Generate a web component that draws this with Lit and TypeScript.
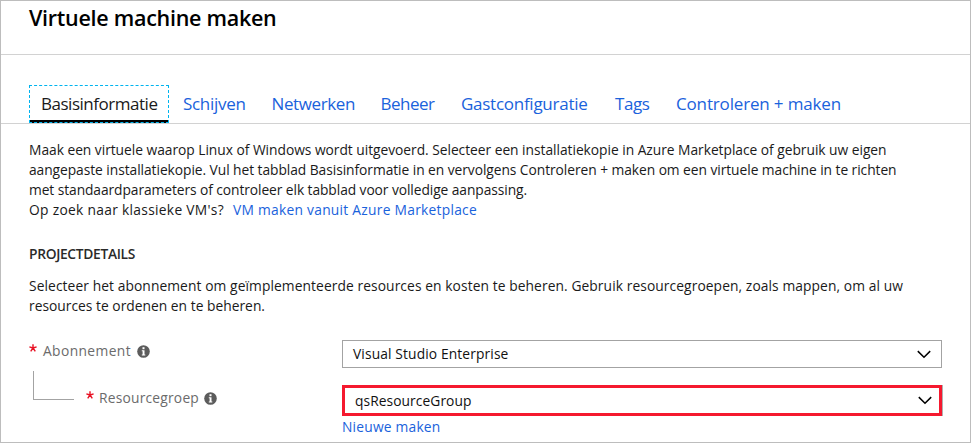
import { LitElement, html, css, svg } from "lit";
import { customElement, property, state } from "lit/decorators.js";
import { styleMap } from "lit/directives/style-map.js";

/** A single line of text whose tracking is adjusted to fill a given width. */
@customElement("fit-text")
class FitText extends LitElement {
  @property() text = "";
  @property({ type: Number }) width = 0;
  @state() private tracking = 0;

  static styles = css`
    :host { display: block; flex: none; white-space: pre; }
    .run { display: inline-block; }
  `;

  firstUpdated() {
    const run = this.renderRoot.querySelector(".run") as HTMLElement;
    const natural = run.getBoundingClientRect().width;
    this.tracking = (this.width - natural) / this.text.length;
  }

  render() {
    return html`<span class="run" style=${styleMap({ letterSpacing: `${this.tracking}px` })}>${this.text}</span>`;
  }
}

@customElement("info-icon")
class InfoIcon extends LitElement {
  static styles = css`
    :host { display: block; flex: none; width: 13px; height: 13px; }
    .icon { display: block; width: 100%; height: 100%; }
  `;
  render() {
    return html`<svg class="icon" viewBox="0 0 13 13">
      <circle cx="6.5" cy="6.5" r="6.3" fill="#5c5c5c" />
      <rect x="5.5" y="2.2" width="2" height="2" fill="#fff" />
      <path d="M4.8 5.2H7.5V9.5H8.3V10.5H4.8V9.5H5.6V6.2H4.8Z" fill="#fff" />
    </svg>`;
  }
}

@customElement("required-mark")
class RequiredMark extends LitElement {
  static styles = css`
    :host { display: block; flex: none; width: 8px; height: 8px; }
    .mark { display: block; }
  `;
  render() {
    return html`<svg class="mark" width="8" height="8" viewBox="0 0 8 8">
      ${svg`<path d="M4 4V0.2M4 4L0.4 2.9M4 4L7.6 2.9M4 4L1.7 7.3M4 4L6.3 7.3" stroke="#e81123" stroke-width="1.4" fill="none" />`}
    </svg>`;
  }
}

@customElement("select-box")
class SelectBox extends LitElement {
  @property() value = "";
  @property({ type: Number }) textWidth = 0;
  static styles = css`
    :host { display: flex; align-items: center; justify-content: space-between; box-sizing: border-box;
      background: #fff; color: #111; line-height: 20px; }
    .chevron { display: block; flex: none; }
  `;
  render() {
    return html`<fit-text .text=${this.value} .width=${this.textWidth}></fit-text>
      <svg class="chevron" width="14" height="9" viewBox="0 0 14 9">
        <path d="M0.8 1.1L7 7.3L13.2 1.1" fill="none" stroke="#000" stroke-width="1.5" />
      </svg>`;
  }
}

const TABS = [
  { label: "Schijven", width: 62.5 },
  { label: "Netwerken", width: 83.5 },
  { label: "Beheer", width: 54 },
  { label: "Gastconfiguratie", width: 126.5 },
  { label: "Tags", width: 34.5 },
  { label: "Controleren + maken", width: 165 },
];

const INTRO = [
  { text: "Maak een virtuele waarop Linux of Windows wordt uitgevoerd. Selecteer een installatiekopie in Azure Marketplace of gebruik uw eigen", width: 857.5 },
  { text: "aangepaste installatiekopie. Vul het tabblad Basisinformatie in en vervolgens Controleren + maken om een virtuele machine in te richten", width: 867.5 },
  { text: "met standaardparameters of controleer elk tabblad voor volledige aanpassing.", width: 498 },
];

@customElement("app-root")
class AppRoot extends LitElement {
  static styles = css`
    :host { display: block; box-sizing: border-box; width: 971px; height: 443px; overflow: hidden;
      background: #fff; border: 1px solid #bdbdbd; color: #1a1a1a;
      font-family: "Open Sans", "Noto Sans", sans-serif; font-size: 13.8px; font-weight: 400; line-height: 20px; }
    .title { box-sizing: border-box; height: 54px; margin: 0; padding: 2px 0 0 28px;
      border-bottom: 1px solid #d2d2d2; font-size: 21.5px; line-height: 30px; font-weight: 600; color: #000; }
    .tabs { display: flex; box-sizing: border-box; height: 69px; padding: 30px 0 0 28px;
      border-bottom: 1px solid #d2d2d2; font-size: 17px; color: #1a62dc; }
    .active { box-sizing: border-box; width: 140px; height: 38px; padding: 8px 0 0 11px; flex: none;
      color: #1a1a1a; border: 1px dashed #00b4ef;
      background: linear-gradient(#000, #000) bottom / 100% 3px no-repeat border-box; }
    .tab { padding-top: 9px; flex: none; }
    .list { display: grid; grid-template-columns: 88.5px 109px 80.5px 154px 61px auto; padding-left: 14px; }
    .intro { padding: 16px 0 0 28px; }
    .row { display: flex; }
    .link { color: #1a62dc; }
    .more { gap: 9px; }
    .heading { margin: 0; padding: 24px 0 0 28px; font-size: 13.8px; font-weight: 600; color: #2a2a2a; }
    .details { padding: 12px 0 0 28px; }
    .form { display: grid; grid-template-columns: 313px 601px; padding: 24px 0 0 28px; }
    .labels { color: #6b6b6b; }
    .field { display: flex; }
    .first { padding-top: 1px; }
    .first required-mark { margin: 3px 6px 0 0; }
    .first info-icon { margin: 4px 0 0 6px; }
    .child { display: flex; height: 47px; }
    .branch { box-sizing: border-box; width: 41px; height: 29px; margin: 10px 12px 0 4px;
      border-left: 1px solid #a3a3a3; border-bottom: 1px solid #a3a3a3; }
    .second { padding-top: 27px; }
    .second required-mark { margin: 3px 5px 0 0; }
    .second info-icon { margin: 4px 0 0 5px; }
    .controls { display: flex; flex-direction: column; align-items: flex-start; }
    .plain { width: 600px; height: 28px; padding: 0 10px; border: 1px solid #a3a3a3; }
    .marked { height: 31px; width: 600px; margin: 17px 0 1px; padding: 0 7px 0 10px; border: 3px solid #f5192f;
      box-shadow: 1px 0 0 #b0b0b0; }
  `;

  render() {
    return html`
      <h1 class="title"><fit-text text="Virtuele machine maken" width="247.5"></fit-text></h1>
      <nav class="tabs">
        <div class="active"><fit-text text="Basisinformatie" width="116.5"></fit-text></div>
        <div class="list">
          ${TABS.map((t) => html`<fit-text class="tab" .text=${t.label} .width=${t.width}></fit-text>`)}
        </div>
      </nav>
      <section class="intro">
        ${INTRO.map((l) => html`<fit-text .text=${l.text} .width=${l.width}></fit-text>`)}
        <div class="row more">
          <fit-text text="Op zoek naar klassieke VM's?" width="195"></fit-text>
          <fit-text class="link" text="VM maken vanuit Azure Marketplace" width="244"></fit-text>
        </div>
      </section>
      <h2 class="heading"><fit-text text="PROJECTDETAILS" width="106"></fit-text></h2>
      <section class="details">
        <fit-text text="Selecteer het abonnement om geïmplementeerde resources en kosten te beheren. Gebruik resourcegroepen, zoals mappen, om al uw" width="874"></fit-text>
        <fit-text text="resources te ordenen en te beheren." width="236"></fit-text>
      </section>
      <section class="form">
        <div class="labels">
          <div class="field first"><required-mark></required-mark><fit-text text="Abonnement" width="88"></fit-text><info-icon></info-icon></div>
          <div class="child">
            <div class="branch"></div>
            <div class="field second"><required-mark></required-mark><fit-text text="Resourcegroep" width="100"></fit-text><info-icon></info-icon></div>
          </div>
        </div>
        <div class="controls">
          <select-box class="plain" value="Visual Studio Enterprise" .textWidth=${155.5}></select-box>
          <select-box class="marked" value="qsResourceGroup" .textWidth=${116.5}></select-box>
          <fit-text class="link" text="Nieuwe maken" width="98.5"></fit-text>
        </div>
      </section>
    `;
  }
}
